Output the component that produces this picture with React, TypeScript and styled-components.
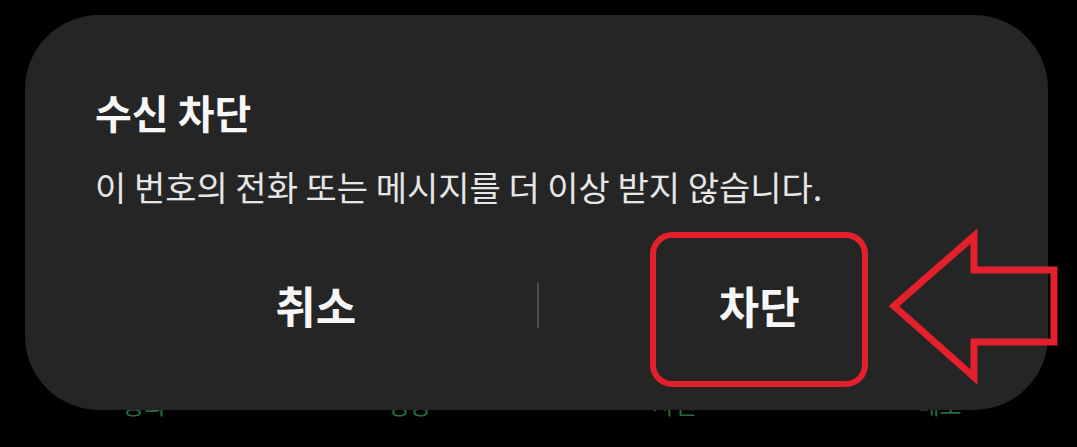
import styled, { createGlobalStyle } from "styled-components";

const GlobalStyle = createGlobalStyle`
  html, body {
    margin: 0;
    padding: 0;
    background: #000;
  }
  body {
    font-family: "Noto Sans CJK KR", "Noto Sans", sans-serif;
  }
`;

const Screen = styled.div`
  position: relative;
  width: 1077px;
  height: 447px;
  overflow: hidden;
  background: #000;
  display: flex;
  flex-direction: column;
  justify-content: flex-end;
`;

// action bar of the call details page, mostly hidden behind the dialog
const TabBar = styled.nav`
  display: grid;
  grid-template-columns: repeat(4, 1fr);
  padding: 0 5px 0 12px;
  margin-bottom: 23px;
`;

const TabLabel = styled.span`
  text-align: center;
  font-size: 24px;
  line-height: 40px;
  color: #256b3b;
`;

const Dialog = styled.div`
  position: absolute;
  top: 15px;
  left: 25px;
  width: 1023px;
  height: 395px;
  box-sizing: border-box;
  border-radius: 74px;
  background: #252525;
  display: flex;
  flex-direction: column;
  padding: 73px 68px 0 70px;
`;

const Title = styled.h2`
  margin: 0;
  font-size: 40px;
  line-height: 48px;
  font-weight: 700;
  color: #f7f7f7;
`;

const Message = styled.p`
  margin: 29px 0 0;
  font-size: 34px;
  line-height: 44px;
  font-weight: 400;
  color: #e6e6e6;
`;

const ButtonRow = styled.div`
  display: flex;
  align-items: center;
  margin-top: 51px;
  height: 90px;
`;

const DialogButton = styled.button`
  position: relative;
  flex: 1;
  height: 100%;
  border: none;
  background: none;
  padding: 0;
  font-family: inherit;
  font-size: 44px;
  font-weight: 700;
  color: #f7f7f7;
  cursor: pointer;
`;

const Divider = styled.span`
  width: 2px;
  height: 45px;
  background: #4d4d4d;
`;

// red outline marking the confirm button
const Highlight = styled.span`
  position: absolute;
  left: 50%;
  top: -28px;
  width: 218px;
  height: 155px;
  box-sizing: border-box;
  transform: translateX(-50%);
  border: 6px solid #e3202b;
  border-radius: 22px;
  pointer-events: none;
`;

const Pointer = styled.svg`
  position: absolute;
  left: 886px;
  top: 229px;
  width: 176px;
  height: 156px;
  overflow: visible;
`;

const tabs = ["통화", "영상", "사진", "메모"];

export default function App() {
  return (
    <>
      <GlobalStyle />
      <Screen>
        <TabBar>
          {tabs.map((t) => (
            <TabLabel key={t}>{t}</TabLabel>
          ))}
        </TabBar>
        <Dialog>
          <Title>수신 차단</Title>
          <Message>이 번호의 전화 또는 메시지를 더 이상 받지 않습니다.</Message>
          <ButtonRow>
            <DialogButton>취소</DialogButton>
            <Divider />
            <DialogButton>
              차단
              <Highlight />
            </DialogButton>
          </ButtonRow>
        </Dialog>
        <Pointer viewBox="886 229 176 156">
          <polygon
            points="894,306 974,236 974,270 1054,270 1054,342 974,342 974,377"
            fill="none"
            stroke="#e3202b"
            strokeWidth="7"
            strokeLinejoin="miter"
          />
        </Pointer>
      </Screen>
    </>
  );
}
